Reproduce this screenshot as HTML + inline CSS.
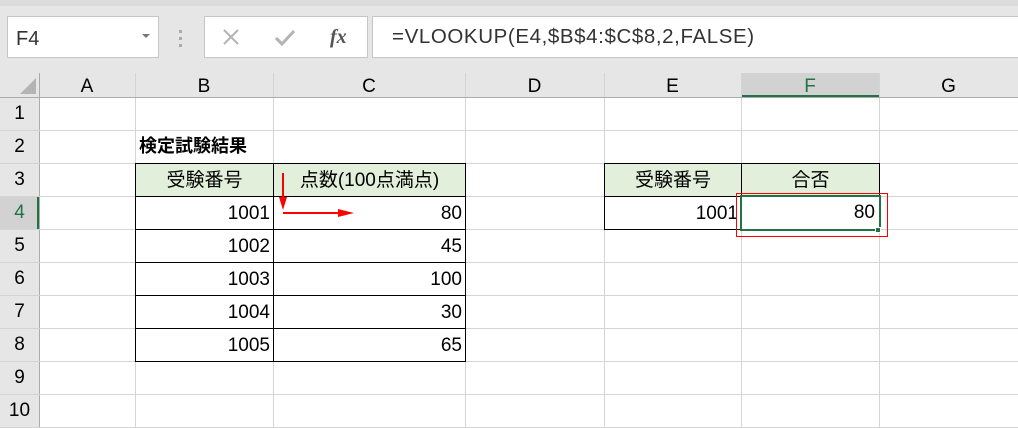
<!DOCTYPE html>
<html><head><meta charset="utf-8"><style>
body{margin:0;width:1018px;height:428px;overflow:hidden;background:#fff;position:relative;font-family:"Liberation Sans","Noto Sans CJK JP",sans-serif;}
div{position:absolute;box-sizing:border-box}
.v{width:1px;background:#d4d4d4;top:73px;height:355px}
.h{height:1px;background:#d4d4d4;left:0;width:1018px}
.ch{top:73px;height:24px;font-size:19px;text-align:center;line-height:27px;color:#000}
.rh{left:0;width:39px;height:33px;font-size:19px;text-align:center;line-height:34px;color:#000}
.c{font-size:19px;height:33px;line-height:33px;color:#000}
.r{text-align:right;padding-right:3px}
.m{text-align:center}
.hd{background:#e2efda}
</style></head><body>
<div style="left:0;top:0;width:1018px;height:73px;background:#e6e6e6"></div>
<div style="left:0;top:0;width:1018px;height:6px;background:#dcdcdc"></div>
<div style="left:7px;top:16px;width:152px;height:42px;background:#fff;border:1px solid #c6c6c6;font-size:20px;line-height:44px;padding-left:8px;color:#333">F4</div>
<div style="left:142px;top:34px;width:0;height:0;border-left:4px solid transparent;border-right:4px solid transparent;border-top:4px solid #777"></div>
<div style="left:179px;top:30px;width:3px;height:3px;background:#aaa"></div>
<div style="left:179px;top:37px;width:3px;height:3px;background:#aaa"></div>
<div style="left:179px;top:44px;width:3px;height:3px;background:#aaa"></div>
<div style="left:204px;top:16px;width:164px;height:42px;background:#fff;border:1px solid #c6c6c6"></div>
<svg style="position:absolute;left:222px;top:28px" width="60" height="20"><path d="M2 2L16 16M16 2L2 16" stroke="#b4b4b4" stroke-width="2"/><path d="M54 10L60 16L72 3" stroke="#b4b4b4" stroke-width="3" fill="none"/></svg>
<svg style="position:absolute;left:270px;top:28px" width="30" height="20"><path d="M6 10L12 16L24 3" stroke="#b4b4b4" stroke-width="3" fill="none"/></svg>
<div style="left:330px;top:22px;font-family:'Liberation Serif',serif;font-style:italic;font-weight:bold;font-size:20px;color:#555;line-height:30px">fx</div>
<div style="left:372px;top:16px;width:650px;height:42px;background:#fff;border:1px solid #c6c6c6;font-size:20.5px;line-height:40px;padding-left:19px;color:#333;letter-spacing:0.6px">=VLOOKUP(E4,$B$4:$C$8,2,FALSE)</div>
<div style="left:0;top:73px;width:1018px;height:24px;background:#e6e6e6"></div>
<div style="left:0;top:97px;width:39px;height:331px;background:#e6e6e6"></div>
<svg style="position:absolute;left:20px;top:78px" width="16" height="16"><path d="M16 0L16 16L0 16Z" fill="#b4b4b4"/></svg>
<div style="left:741px;top:73px;width:138px;height:24px;background:#d2d2d2;border-bottom:2px solid #217346"></div>
<div style="left:0;top:196px;width:39px;height:33px;background:#d2d2d2;border-right:2px solid #217346"></div>
<div class="v" style="left:39px;background:#ababab"></div>
<div class="v" style="left:135px"></div><div class="v" style="left:273px"></div><div class="v" style="left:465px"></div><div class="v" style="left:604px"></div><div class="v" style="left:741px"></div><div class="v" style="left:879px"></div>
<div class="h" style="top:97px;background:#ababab"></div>
<div class="h" style="top:130px"></div><div class="h" style="top:163px"></div><div class="h" style="top:196px"></div><div class="h" style="top:229px"></div><div class="h" style="top:262px"></div><div class="h" style="top:295px"></div><div class="h" style="top:328px"></div><div class="h" style="top:361px"></div><div class="h" style="top:394px"></div><div class="h" style="top:427px"></div>
<div class="ch" style="left:39px;width:96px">A</div><div class="ch" style="left:135px;width:138px">B</div><div class="ch" style="left:273px;width:192px">C</div><div class="ch" style="left:465px;width:139px">D</div><div class="ch" style="left:604px;width:137px">E</div><div class="ch" style="left:741px;width:138px;color:#217346">F</div><div class="ch" style="left:879px;width:139px">G</div>
<div class="rh" style="top:97px">1</div><div class="rh" style="top:130px">2</div><div class="rh" style="top:163px">3</div><div class="rh" style="top:196px;color:#217346">4</div><div class="rh" style="top:229px">5</div><div class="rh" style="top:262px">6</div><div class="rh" style="top:295px">7</div><div class="rh" style="top:328px">8</div><div class="rh" style="top:361px">9</div><div class="rh" style="top:394px">10</div>
<div class="c" style="left:139px;top:130px;font-weight:bold;font-size:18px">検定試験結果</div>
<div class="c hd m" style="left:135px;top:163px;width:139px;height:34px;border:1px solid #000">受験番号</div>
<div class="c hd m" style="left:273px;top:163px;width:193px;height:34px;border:1px solid #000">点数(100点満点)</div>
<div class="c hd m" style="left:604px;top:163px;width:138px;height:34px;border:1px solid #000">受験番号</div>
<div class="c hd m" style="left:741px;top:163px;width:139px;height:34px;border:1px solid #000">合否</div>
<div class="c r" style="left:135px;top:196px;width:139px;height:34px;border:1px solid #000">1001</div>
<div class="c r" style="left:273px;top:196px;width:193px;height:34px;border:1px solid #000">80</div>
<div class="c r" style="left:135px;top:229px;width:139px;height:34px;border:1px solid #000">1002</div>
<div class="c r" style="left:273px;top:229px;width:193px;height:34px;border:1px solid #000">45</div>
<div class="c r" style="left:135px;top:262px;width:139px;height:34px;border:1px solid #000">1003</div>
<div class="c r" style="left:273px;top:262px;width:193px;height:34px;border:1px solid #000">100</div>
<div class="c r" style="left:135px;top:295px;width:139px;height:34px;border:1px solid #000">1004</div>
<div class="c r" style="left:273px;top:295px;width:193px;height:34px;border:1px solid #000">30</div>
<div class="c r" style="left:135px;top:328px;width:139px;height:34px;border:1px solid #000">1005</div>
<div class="c r" style="left:273px;top:328px;width:193px;height:34px;border:1px solid #000">65</div>
<div class="c r" style="left:604px;top:196px;width:138px;height:34px;border:1px solid #000">1001</div>
<div class="c r" style="left:740px;top:195px;width:141px;height:36px;border:2px solid #217346;line-height:32px;padding-right:4px">80</div>
<div style="left:875px;top:227px;width:6px;height:6px;background:#217346;border:1px solid #fff"></div>
<div style="left:736px;top:193px;width:152px;height:44px;border:1.5px solid #f00"></div>
<svg style="position:absolute;left:270px;top:165px" width="100" height="60"><path d="M13 8V38" stroke="#f00" stroke-width="2"/><path d="M9 32L13 45L17 32Z" fill="#f00"/><path d="M13 48H75" stroke="#f00" stroke-width="2"/><path d="M68 44L84 48L68 52Z" fill="#f00"/></svg>
</body></html>
